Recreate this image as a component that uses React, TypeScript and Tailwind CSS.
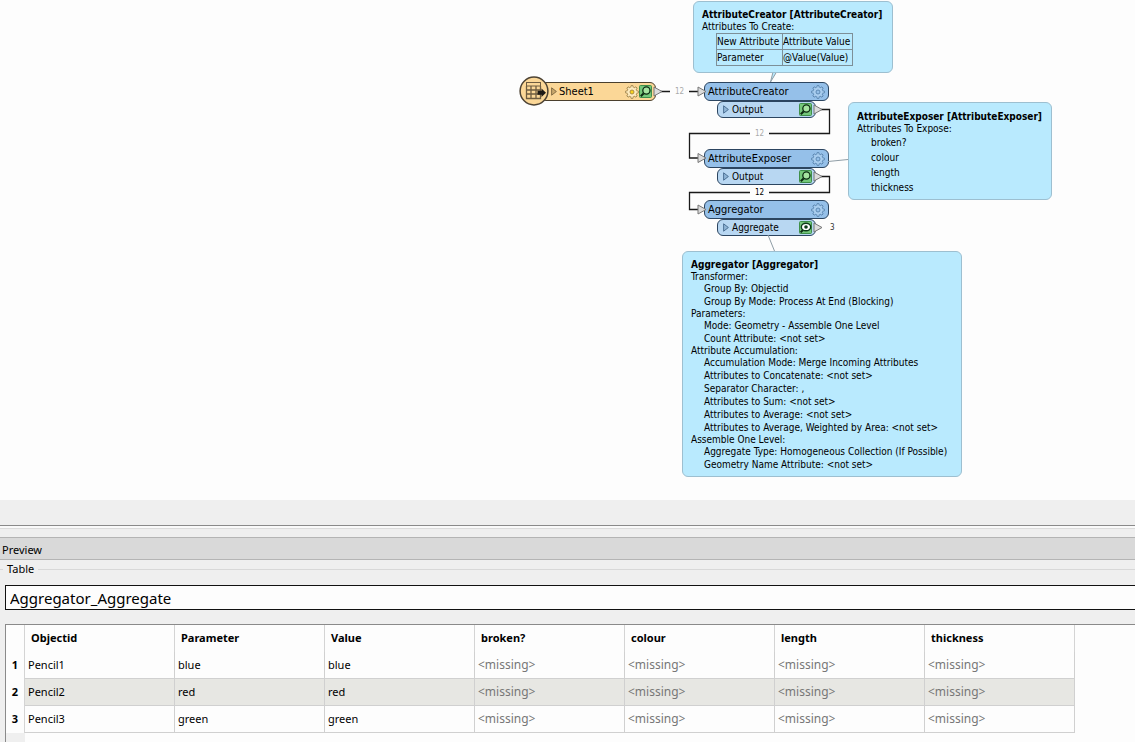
import React from "react";

const CANVAS_FONT = "font-['DejaVu_Sans_Condensed','DejaVu_Sans',sans-serif]";

function GearIcon({ stroke, fill, core }: { stroke: string; fill: string; core: string }) {
  const teeth = Array.from({ length: 8 }, (_, i) => i * 45);
  return (
    <svg viewBox="0 0 14 14" className="size-3.5 shrink-0" aria-hidden="true">
      {teeth.map((angle) => (
        <path
          key={angle}
          d="M5.6 2.8 L6.1 0.6 H7.9 L8.4 2.8"
          fill={fill}
          stroke={stroke}
          strokeWidth="0.8"
          transform={`rotate(${angle} 7 7)`}
        />
      ))}
      <circle cx="7" cy="7" r="4.4" fill={fill} />
      <circle cx="7" cy="7" r="2" fill={core} stroke={stroke} strokeWidth="0.8" />
    </svg>
  );
}

function InspectIcon({ eye = false }: { eye?: boolean }) {
  return (
    <svg viewBox="0 0 13 13" className="size-[13px] shrink-0" aria-hidden="true">
      <rect x="0.5" y="0.5" width="12" height="12" rx="1" fill="#74c77a" stroke="#3f8f4a" />
      {eye ? (
        <>
          <path d="M1.6 11.4 L4 9" stroke="#0c2a12" strokeWidth="2" />
          <ellipse cx="7" cy="6" rx="4.7" ry="3.8" fill="#fff" stroke="#0c3a18" strokeWidth="1.4" />
          <circle cx="7" cy="6" r="1.8" fill="#0c3a18" />
        </>
      ) : (
        <>
          <path d="M1.8 11.2 L4.8 8.2" stroke="#0c2a12" strokeWidth="2" />
          <circle cx="7.4" cy="5.5" r="3.6" fill="#a5e3a0" stroke="#0c2a12" strokeWidth="1.3" />
        </>
      )}
    </svg>
  );
}

function Expander({ fill, stroke }: { fill: string; stroke: string }) {
  return (
    <svg viewBox="0 0 6 9" className="h-[9px] w-1.5 shrink-0" aria-hidden="true">
      <path d="M0.6 0.8 L5.4 4.5 L0.6 8.2 Z" fill={fill} stroke={stroke} strokeWidth="0.9" />
    </svg>
  );
}

function ReaderBadge() {
  return (
    <svg viewBox="0 0 30 30" className="size-[30px]" aria-hidden="true">
      <circle cx="15" cy="15" r="13.9" fill="#fbd797" stroke="#4d4334" strokeWidth="1.5" />
      <rect x="7.5" y="6.5" width="14" height="3.5" fill="#fbd797" stroke="#6e5c40" />
      <path
        d="M7.5 10 V22.5 H21.5 V10 M7.5 14 H21.5 M7.5 18 H21.5 M12 10 V22.5 M17 10 V22.5"
        fill="none"
        stroke="#6e5c40"
        strokeWidth="1.3"
      />
      <path d="M18.5 14.700 H22.500 V12.500 L27 16.700 L22.500 21 V18.700 H18.500 Z" fill="#1d1a16" />
    </svg>
  );
}

interface TransformerProps {
  name: string;
  port: string;
  place: string;
  eye?: boolean;
}

function Transformer({ name, port, place, eye }: TransformerProps) {
  return (
    <div className={`absolute w-[125px] ${place}`}>
      <div className="flex h-[19px] items-center justify-between rounded-md border border-[#2c4560] bg-[#95c0e9] pr-[3px] pl-[3px] text-[11px] leading-4">
        <span>{name}</span>
        <GearIcon stroke="#4f7ba6" fill="#a9cdee" core="#95c0e9" />
      </div>
      <div className="ml-[13px] flex h-[17px] w-[99px] items-center rounded-md border border-[#2c4560] bg-[#b8d7f2] pr-[3px] pl-[5px] text-[10px] leading-3">
        <Expander fill="#8fb4d6" stroke="#44688c" />
        <span className="ml-[3px] grow">{port}</span>
        <InspectIcon eye={eye} />
      </div>
    </div>
  );
}

function Note({ title, place, children }: { title: string; place: string; children: React.ReactNode }) {
  return (
    <section
      className={`absolute rounded-md border border-[#9dbfd0] bg-[#b9eafe] px-2 text-[10px] leading-3 whitespace-nowrap ${place}`}
    >
      <h2 className="font-bold">{title}</h2>
      {children}
    </section>
  );
}

const aggregatorSettings = [
  { group: "Transformer:", items: ["Group By: Objectid", "Group By Mode: Process At End (Blocking)"] },
  { group: "Parameters:", items: ["Mode: Geometry - Assemble One Level", "Count Attribute: <not set>"] },
  {
    group: "Attribute Accumulation:",
    items: [
      "Accumulation Mode: Merge Incoming Attributes",
      "Attributes to Concatenate: <not set>",
      "Separator Character: ,",
      "Attributes to Sum: <not set>",
      "Attributes to Average: <not set>",
      "Attributes to Average, Weighted by Area: <not set>",
    ],
  },
  {
    group: "Assemble One Level:",
    items: [
      "Aggregate Type: Homogeneous Collection (If Possible)",
      "Geometry Name Attribute: <not set>",
    ],
  },
];

function Connections() {
  return (
    <svg className="absolute inset-0 size-full" aria-hidden="true">
      <g fill="none" stroke="#8f9da6">
        <path d="M776.5 72 L770.5 82 L773 72" fill="#b9eafe" />
        <path d="M828 161.5 L848 159.5" />
        <path d="M768 235 L774.5 251" />
      </g>
      <g fill="none" stroke="#1a1a1a" strokeWidth="1.3">
        <path d="M660 91.5 H670 M689 91.5 H698" />
        <path d="M821 109.5 H829.5 V133.5 H769 M750 133.5 H689.5 V158 H698" />
        <path d="M821 176.5 H829.5 V192.5 H769 M750 192.5 H689.5 V209.5 H698" />
      </g>
      <g fill="#dcdcdc" stroke="#777">
        <path d="M654 87 L662 91.5 L654 96 Z" />
        <path d="M698 87 L706 91.5 L698 96 Z" />
        <path d="M698 153.5 L706 158 L698 162.5 Z" />
        <path d="M698 205 L706 209.5 L698 214 Z" />
        <path d="M814 105 L822 109.5 L814 114 Z" />
        <path d="M814 172 L822 176.5 L814 181 Z" />
        <path d="M814 223 L822 227.5 L814 232 Z" />
      </g>
    </svg>
  );
}

function Workspace() {
  return (
    <main className={`relative h-[500px] overflow-hidden bg-[#fdfdfd] text-black ${CANVAS_FONT}`}>
      <div className="absolute top-[82px] left-[540px] flex h-[19px] w-[116px] items-center rounded-md border border-[#4a3f2d] bg-[#fbd797] pr-[3px] pl-2.5 text-[11px] leading-4">
        <Expander fill="#c9a86c" stroke="#7d6740" />
        <span className="ml-0.5 grow">Sheet1</span>
        <GearIcon stroke="#94783f" fill="#fdebc0" core="#f7d31e" />
        <InspectIcon />
      </div>
      <div className="absolute top-[76px] left-[519px]">
        <ReaderBadge />
      </div>

      <Transformer name="AttributeCreator" port="Output" place="left-[704px] top-[82px]" />
      <Transformer name="AttributeExposer" port="Output" place="left-[704px] top-[149px]" />
      <Transformer name="Aggregator" port="Aggregate" place="left-[704px] top-[200px]" eye />

      <Connections />

      <span className="absolute top-[86px] left-[675px] text-[8px] leading-3 text-[#aaa]">12</span>
      <span className="absolute top-[128px] left-[755px] text-[8px] leading-3 text-[#aaa]">12</span>
      <span className="absolute top-[187px] left-[755px] text-[8px] leading-3">12</span>
      <span className="absolute top-[222px] left-[830px] text-[8px] leading-3 text-[#333]">3</span>

      <Note title="AttributeCreator [AttributeCreator]" place="left-[693px] top-[1px] h-[72px] w-[200px] pt-[7px]">
        <p>Attributes To Create:</p>
        <table className="ml-3.5 border-collapse">
          <tbody>
            <tr className="h-4">
              <td className="w-[66px] border border-[#7d8f98] p-0">New Attribute</td>
              <td className="w-[70px] border border-[#7d8f98] p-0">Attribute Value</td>
            </tr>
            <tr className="h-4">
              <td className="border border-[#7d8f98] p-0">Parameter</td>
              <td className="border border-[#7d8f98] p-0">@Value(Value)</td>
            </tr>
          </tbody>
        </table>
      </Note>

      <Note title="AttributeExposer [AttributeExposer]" place="left-[848px] top-[102px] h-[98px] w-[204px] pt-2">
        <p>Attributes To Expose:</p>
        <ul className="pl-3.5 leading-[15px]">
          <li>broken?</li>
          <li>colour</li>
          <li>length</li>
          <li>thickness</li>
        </ul>
      </Note>

      <Note title="Aggregator [Aggregator]" place="left-[682px] top-[251px] h-[226px] w-[280px] pt-[7px]">
        {aggregatorSettings.map(({ group, items }) => (
          <div key={group}>
            <h3 className="leading-[11px]">{group}</h3>
            <ul className="pl-[13px] leading-[13px]">
              {items.map((item) => (
                <li key={item}>{item}</li>
              ))}
            </ul>
          </div>
        ))}
      </Note>
    </main>
  );
}

const columns = ["Objectid", "Parameter", "Value", "broken?", "colour", "length", "thickness"];
const rows = [
  ["Pencil1", "blue", "blue"],
  ["Pencil2", "red", "red"],
  ["Pencil3", "green", "green"],
];

function Preview() {
  return (
    <section className="flex grow flex-col bg-[#efefef] font-['Noto_Sans',sans-serif] text-[11px] text-black">
      <div className="h-[26px] border-b border-[#8a8a8a]" />
      <div className="h-[3px] border-b border-[#dcdcdc] bg-[#fafafa]" />
      <h2 className="mt-2 h-[23px] border-y border-[#b4b4b4] bg-[#d9d9d9] pl-0.5 leading-[23px]">Preview</h2>
      <div className="flex h-[18px] items-center gap-1">
        <span className="w-[3px] border-t border-[#d8d8d8]" />
        <label htmlFor="feature-type" className="leading-4">Table</label>
        <span className="grow border-t border-[#d8d8d8]" />
      </div>
      <select
        id="feature-type"
        className="mt-[7px] ml-[5px] h-[25px] appearance-none border border-r-0 border-[#111] bg-[#fdfdfd] pl-1 text-[15px] leading-5"
      >
        <option>Aggregator_Aggregate</option>
      </select>
      <div className="mt-[14px] ml-[5px] grow overflow-hidden border-t border-l border-[#8a8a8a] bg-[#fdfdfd]">
        <table className="w-[1069px] table-fixed border-separate border-spacing-0 text-left">
          <thead>
            <tr className="h-[27px]">
              <th className="w-[19px] border-r border-[#d4d4d4] p-0" />
              {columns.map((column) => (
                <th key={column} scope="col" className="border-r border-[#d4d4d4] py-0 pr-0 pl-1.5 font-bold">
                  {column}
                </th>
              ))}
            </tr>
          </thead>
          <tbody>
            {rows.map((row, index) => (
              <tr key={row[0]} className="group h-[27px]">
                <th scope="row" className="border-r border-[#d4d4d4] p-0 text-center font-bold">
                  {index + 1}
                </th>
                {columns.map((column, i) => (
                  <td
                    key={column}
                    className="border-r border-b border-[#d0d0d0] py-0 pr-0 pl-[3px] group-even:bg-[#e7e7e3]"
                  >
                    {row[i] ?? <span className="text-[12px] text-[#777]">&lt;missing&gt;</span>}
                  </td>
                ))}
              </tr>
            ))}
          </tbody>
        </table>
        <div className="h-[9px] w-[19px] bg-[#efefef]" />
      </div>
    </section>
  );
}

export default function App() {
  return (
    <div className="flex min-h-screen flex-col">
      <Workspace />
      <Preview />
    </div>
  );
}
